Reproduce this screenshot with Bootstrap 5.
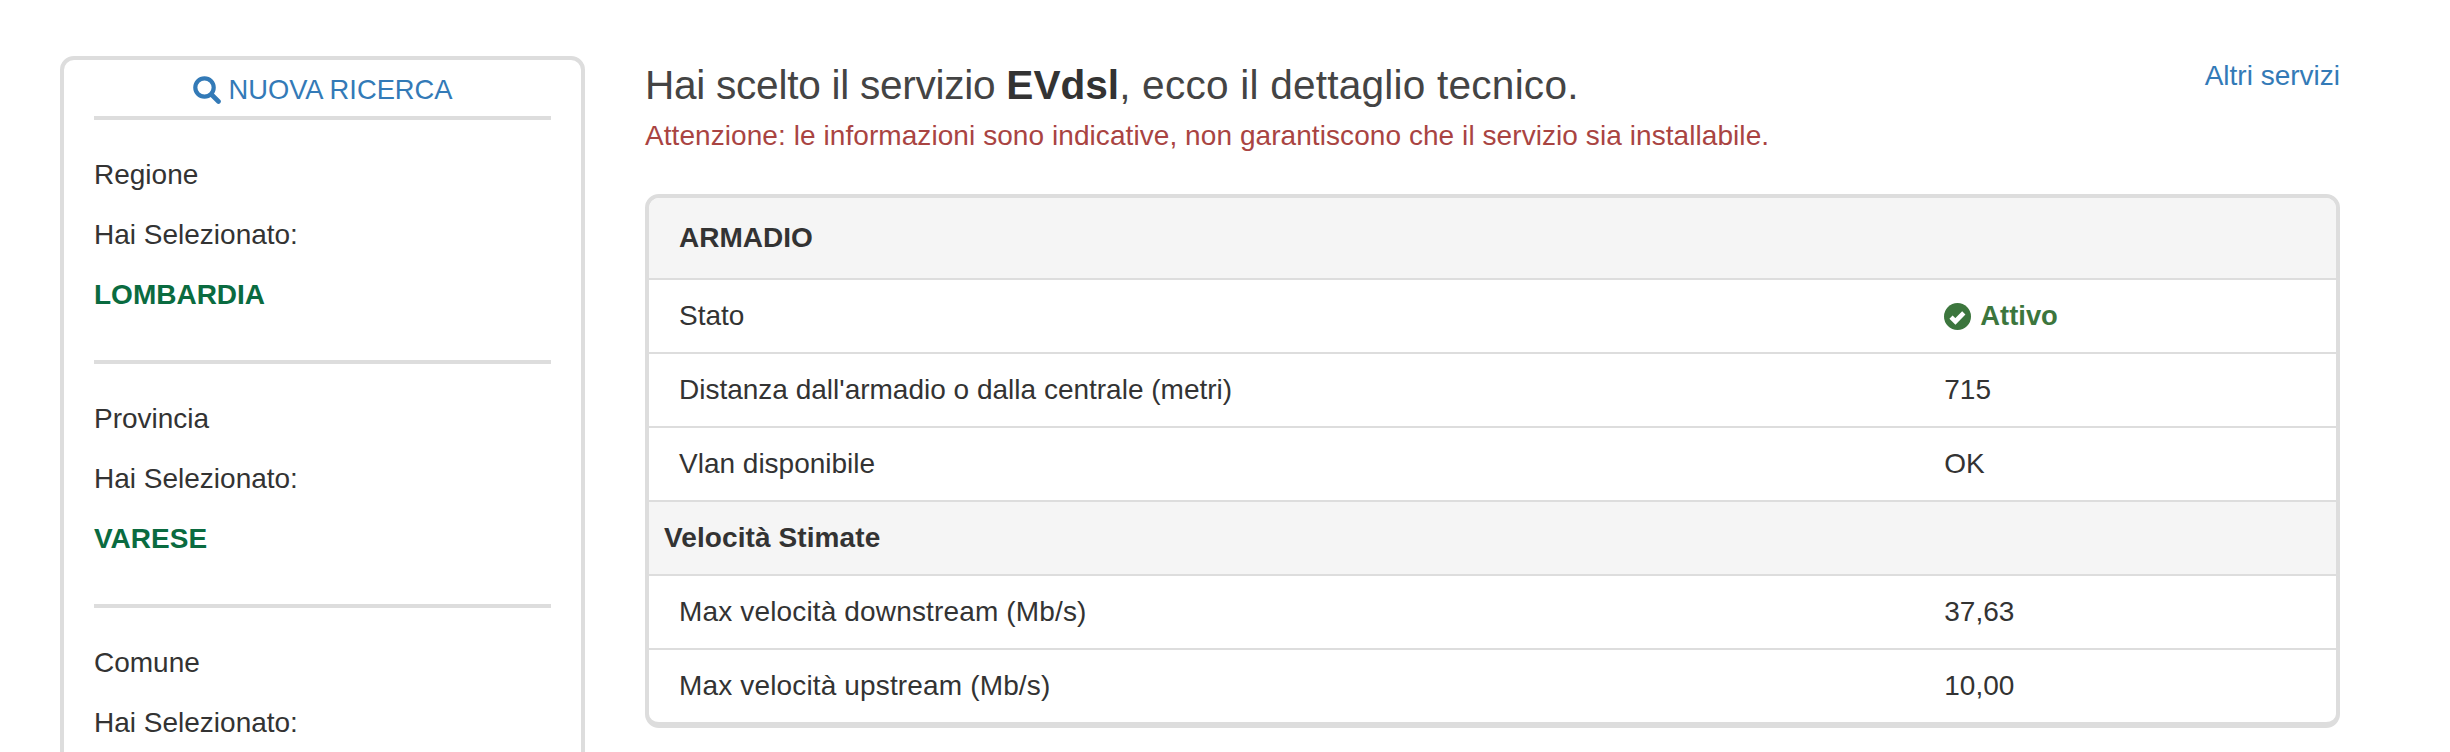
<!DOCTYPE html>
<html lang="it">
<head>
    <meta charset="UTF-8">
    <title>Dettaglio servizio</title>
    <link rel="stylesheet" href="https://cdn.jsdelivr.net/npm/bootstrap@5.3.0/dist/css/bootstrap.min.css">
    <style>
        html, body {
            height: 100vh;
            overflow: hidden;
        }
        body {
            background-color: #fff;
            color: #333;
            font-family: "Liberation Sans", Arial, sans-serif;
            font-size: 28px;
            line-height: 40px;
        }
        a {
            color: #337ab7;
            text-decoration: none;
        }
        .page-wrap {
            padding: 56px 110px 0 60px;
            gap: 60px;
        }
        .search-panel {
            width: 525px;
            min-height: 760px;
            flex-shrink: 0;
            padding: 10px 30px 0;
            border: 4px solid #ddd;
            border-radius: 14px;
        }
        .search-link {
            gap: 8px;
            margin-bottom: 6px;
            font-size: 27.3px;
        }
        .search-rule {
            height: 4px;
            margin: 0;
            border: 0;
            background: #ddd;
            opacity: 1;
        }
        .search-rule-top {
            margin-bottom: 35px;
        }
        .search-rule-mid {
            margin: 45px 0 35px;
        }
        .search-panel p {
            margin: 0 0 20px;
        }
        .search-panel p:last-of-type {
            margin-bottom: 0;
        }
        .picked {
            color: #0a6b40;
            font-weight: 700;
        }
        .detail-side {
            min-width: 0;
        }
        .detail-title {
            margin: 0 0 3px;
            padding-top: 1px;
            font-size: 40.6px;
            line-height: 56px;
            font-weight: 400;
            color: #444;
        }
        .detail-title strong {
            color: #333;
        }
        .title-lead {
            letter-spacing: -.27px;
        }
        .title-tail {
            letter-spacing: .22px;
        }
        .detail-warn {
            color: #a94442;
            margin-bottom: 38px;
            letter-spacing: .07px;
        }
        .altri-link {
            line-height: 40px;
        }
        .tech-panel {
            border: 4px solid #ddd;
            border-bottom-width: 6px;
            border-radius: 14px;
            --bs-card-bg: #fff;
        }
        .tech-panel .table {
            margin: 0;
            table-layout: fixed;
            color: #333;
        }
        .tech-panel td {
            padding: 16px 0 16px 30px;
            border-bottom: 2px solid #ddd;
            font-size: 28px;
            line-height: 40px;
            color: #333;
        }
        .tech-panel tr:last-child td {
            border-bottom: 0;
        }
        .tech-panel td.head-cell {
            padding-top: 20px;
            padding-bottom: 20px;
            background: #f5f5f5;
            font-weight: 700;
        }
        .tech-panel td.sub-cell {
            padding-left: 15px;
            background: #f5f5f5;
            font-weight: 700;
            letter-spacing: .1px;
        }
        .tech-panel td.speed-label {
            letter-spacing: .15px;
        }
        .col-value {
            width: 25%;
        }
        .stato-ok {
            height: 40px;
            color: #3c763d;
            font-size: 27.4px;
            font-weight: 700;
            gap: 9px;
            vertical-align: top;
        }
    </style>
</head>
<body>
<div class="page-wrap d-flex align-items-start">
    <aside class="search-panel">
        <a href="#" class="search-link d-flex justify-content-center align-items-center">
            <svg width="28" height="28" viewBox="0 0 28 28" fill="none" stroke="#337ab7" aria-hidden="true">
                <circle cx="11.5" cy="11.5" r="9.2" stroke-width="4.2"/>
                <path d="M18.5 18.5l7 7" stroke-width="4.6" stroke-linecap="round"/>
            </svg>
            NUOVA RICERCA
        </a>
        <hr class="search-rule search-rule-top">
        <p>Regione</p>
        <p>Hai Selezionato:</p>
        <p class="picked">LOMBARDIA</p>
        <hr class="search-rule search-rule-mid">
        <p>Provincia</p>
        <p>Hai Selezionato:</p>
        <p class="picked">VARESE</p>
        <hr class="search-rule search-rule-mid">
        <p>Comune</p>
        <p>Hai Selezionato:</p>
    </aside>
    <main class="detail-side flex-grow-1">
        <div class="d-flex justify-content-between align-items-start">
            <h3 class="detail-title"><span class="title-lead">Hai scelto il servizio </span><strong>EVdsl</strong><span class="title-tail">, ecco il dettaglio tecnico.</span></h3>
            <a href="#" class="altri-link">Altri servizi</a>
        </div>
        <div class="detail-warn">Attenzione: le informazioni sono indicative, non garantiscono che il servizio sia installabile.</div>
        <div class="tech-panel card overflow-hidden">
            <table class="table">
                <colgroup>
                    <col>
                    <col class="col-value">
                </colgroup>
                <tbody>
                <tr><td class="head-cell" colspan="2">ARMADIO</td></tr>
                <tr>
                    <td>Stato</td>
                    <td>
                        <span class="stato-ok d-inline-flex align-items-center">
                            <svg width="27" height="27" viewBox="0 0 27 27" aria-hidden="true">
                                <circle cx="13.5" cy="13.5" r="13.5" fill="#3c763d"/>
                                <path d="M7 14.2l4.4 4.2 8.4-8.6" fill="none" stroke="#fff" stroke-width="4.6"/>
                            </svg>
                            Attivo
                        </span>
                    </td>
                </tr>
                <tr><td>Distanza dall'armadio o dalla centrale (metri)</td><td>715</td></tr>
                <tr><td>Vlan disponibile</td><td>OK</td></tr>
                <tr><td class="sub-cell" colspan="2">Velocità Stimate</td></tr>
                <tr><td class="speed-label">Max velocità downstream (Mb/s)</td><td>37,63</td></tr>
                <tr><td class="speed-label">Max velocità upstream (Mb/s)</td><td>10,00</td></tr>
                </tbody>
            </table>
        </div>
    </main>
</div>
<script src="https://cdn.jsdelivr.net/npm/bootstrap@5.3.0/dist/js/bootstrap.bundle.min.js"></script>
</body>
</html>
